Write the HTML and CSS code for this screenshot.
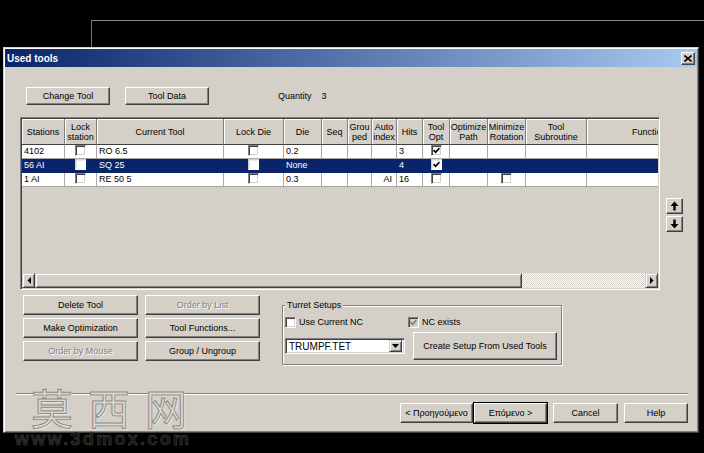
FILE: index.html
```html
<!DOCTYPE html>
<html>
<head>
<meta charset="utf-8">
<title>Used tools</title>
<link rel="stylesheet" href="styles.css">
</head>
<body>
<div class="desktop">
  <div class="bgwin"></div>
  <div class="dialog">
    <div class="titlebar">
      <span class="title">Used tools</span>
      <span class="close"><svg width="8" height="7" viewBox="0 0 8 7"><path d="M0.5 0.5 L7.5 6.5 M7.5 0.5 L0.5 6.5" stroke="#000" stroke-width="1.6" fill="none"/></svg></span>
    </div>
    <div class="content">
      <div class="toprow">
        <button class="btn b84">Change Tool</button>
        <button class="btn b84 gap14">Tool Data</button>
        <span class="qty">Quantity</span><span class="qtyval">3</span>
      </div>

      <div class="midrow">
        <div class="grid">
          <div class="gridview">
            <table class="tbl">
              <colgroup>
                <col class="c-st"><col class="c-ls"><col class="c-ct"><col class="c-ld"><col class="c-die"><col class="c-seq"><col class="c-gr"><col class="c-ai"><col class="c-hits"><col class="c-to"><col class="c-op"><col class="c-mr"><col class="c-ts"><col class="c-fn">
              </colgroup>
              <thead>
                <tr>
                  <th><div class="h"><span>Stations</span></div></th>
                  <th><div class="h"><span>Lock</span><span>station</span></div></th>
                  <th><div class="h"><span>Current Tool</span></div></th>
                  <th><div class="h"><span>Lock Die</span></div></th>
                  <th><div class="h"><span>Die</span></div></th>
                  <th><div class="h"><span>Seq</span></div></th>
                  <th><div class="h"><span>Grou</span><span>ped</span></div></th>
                  <th><div class="h"><span>Auto</span><span>index</span></div></th>
                  <th><div class="h"><span>Hits</span></div></th>
                  <th><div class="h"><span>Tool</span><span>Opt</span></div></th>
                  <th><div class="h"><span>Optimize</span><span>Path</span></div></th>
                  <th><div class="h"><span>Minimize</span><span>Rotation</span></div></th>
                  <th><div class="h"><span>Tool</span><span>Subroutine</span></div></th>
                  <th><div class="h"><span>Functions</span></div></th>
                </tr>
              </thead>
              <tbody>
                <tr>
                  <td>4102</td>
                  <td class="ctr"><span class="cb"></span></td>
                  <td>RO 6.5</td>
                  <td class="ctr"><span class="cb"></span></td>
                  <td>0.2</td>
                  <td></td><td></td><td></td>
                  <td>3</td>
                  <td class="ctr"><span class="cb"><svg width="7" height="7" viewBox="0 0 7 7"><path d="M0.6 3.2 L2.6 5.3 L6.4 1.2" stroke="#000" stroke-width="1.7" fill="none"/></svg></span></td>
                  <td></td><td></td><td></td><td></td>
                </tr>
                <tr class="sel">
                  <td>56 AI</td>
                  <td class="ctr"><span class="cb"></span></td>
                  <td>SQ 25</td>
                  <td class="ctr"><span class="cb"></span></td>
                  <td>None</td>
                  <td></td><td></td><td></td>
                  <td>4</td>
                  <td class="ctr"><span class="cb"><svg width="7" height="7" viewBox="0 0 7 7"><path d="M0.6 3.2 L2.6 5.3 L6.4 1.2" stroke="#000" stroke-width="1.7" fill="none"/></svg></span></td>
                  <td></td><td></td><td></td><td></td>
                </tr>
                <tr>
                  <td>1 AI</td>
                  <td class="ctr"><span class="cb"></span></td>
                  <td>RE 50 5</td>
                  <td class="ctr"><span class="cb"></span></td>
                  <td>0.3</td>
                  <td></td><td></td>
                  <td class="rt">AI</td>
                  <td>16</td>
                  <td class="ctr"><span class="cb"></span></td>
                  <td></td>
                  <td class="ctr"><span class="cb"></span></td>
                  <td></td><td></td>
                </tr>
              </tbody>
            </table>
          </div>
          <div class="hscroll">
            <span class="sbtn"><svg width="4" height="7" viewBox="0 0 4 7"><path d="M4 0 L0.5 3.5 L4 7 Z" fill="#000"/></svg></span>
            <span class="thumb"></span>
            <span class="track"></span>
            <span class="sbtn"><svg width="4" height="7" viewBox="0 0 4 7"><path d="M0 0 L3.5 3.5 L0 7 Z" fill="#000"/></svg></span>
          </div>
        </div>
        <div class="arrows">
          <button class="btn abtn"><svg width="9" height="10" viewBox="0 0 9 10"><path d="M4.5 0.5 L8.5 5 L5.7 5 L5.7 9.5 L3.3 9.5 L3.3 5 L0.5 5 Z" fill="#000"/></svg></button>
          <button class="btn abtn"><svg width="9" height="10" viewBox="0 0 9 10"><path d="M4.5 9.5 L8.5 5 L5.7 5 L5.7 0.5 L3.3 0.5 L3.3 5 L0.5 5 Z" fill="#000"/></svg></button>
        </div>
      </div>

      <div class="lowrow">
        <div class="btngrid">
          <button class="btn">Delete Tool</button>
          <button class="btn dis">Order by List</button>
          <button class="btn">Make Optimization</button>
          <button class="btn">Tool Functions...</button>
          <button class="btn dis">Order by Mouse</button>
          <button class="btn">Group / Ungroup</button>
        </div>
        <fieldset class="turret">
          <legend>Turret Setups</legend>
          <div class="trow1">
            <label class="chk first"><span class="cb gray"></span>Use Current NC</label>
            <label class="chk"><span class="cb dis"><svg width="7" height="7" viewBox="0 0 7 7"><path d="M0.6 3.2 L2.6 5.3 L6.4 1.2" stroke="#808080" stroke-width="1.7" fill="none"/></svg></span>NC exists</label>
          </div>
          <div class="trow2">
            <div class="combo">
              <span class="ctext">TRUMPF.TET</span>
              <span class="cbtn"><svg width="7" height="4" viewBox="0 0 7 4"><path d="M0 0 L7 0 L3.5 4 Z" fill="#000"/></svg></span>
            </div>
            <button class="btn create">Create Setup From Used Tools</button>
          </div>
        </fieldset>
      </div>

      <div class="sep"></div>

      <div class="bottomrow">
        <button class="btn b73">&lt; Προηγούμενο</button>
        <button class="btn b73 def">Επόμενο &gt;</button>
        <button class="btn b65 ml6">Cancel</button>
        <button class="btn b64 ml6">Help</button>
      </div>
    </div>
  </div>
  <div class="wm">莫西网</div>
  <div class="wm2">www.3dmox.com</div>
</div>
</body>
</html>
```

FILE: styles.css
```css
* { box-sizing: border-box; }
html, body { margin: 0; padding: 0; }
body {
  width: 704px; height: 453px; overflow: hidden;
  background: #000;
  font-family: "Liberation Sans", Arial, sans-serif;
  font-size: 9px; color: #000;
}
.desktop { position: relative; width: 704px; height: 453px; overflow: hidden; background: #000; }
.bgwin {
  position: absolute; left: 91px; top: 20px; width: 640px; height: 80px;
  border-top: 1px solid #8e8590; border-left: 1px solid #77707a;
}
.dialog {
  position: absolute; left: 3px; top: 47px; width: 696px; height: 386px;
  background: #d4d0c8;
  border: 1px solid; border-color: #d4d0c8 #404040 #404040 #d4d0c8;
  box-shadow: inset 1px 1px #fff, inset -1px -1px #808080;
  padding: 1px;
  display: flex; flex-direction: column;
}
.titlebar {
  height: 18px; flex: none;
  display: flex; align-items: center; justify-content: space-between;
  padding: 0 2px 0 2px;
  background: linear-gradient(to right, #0a246a, #a6caf0);
}
.title { color: #fff; font-weight: bold; font-size: 10px; }
.close {
  width: 14px; height: 13px; background: #d4d0c8;
  border: 1px solid; border-color: #fff #404040 #404040 #fff;
  box-shadow: inset -1px -1px #808080;
  display: flex; align-items: center; justify-content: center;
}
.close svg { display: block; }
.content { flex: 1; display: flex; flex-direction: column; }

.btn {
  font-family: "Liberation Sans", Arial, sans-serif; font-size: 9px; color: #000;
  background: #d4d0c8;
  border: 1px solid; border-color: #fff #404040 #404040 #fff;
  box-shadow: inset -1px -1px #808080;
  padding: 0; margin: 0;
  display: flex; align-items: center; justify-content: center;
  white-space: nowrap;
}
.btn.dis { color: #808080; text-shadow: 1px 1px 0 #fff; }
.btn.def { outline: 1px solid #000; border-color: #fff #404040 #404040 #fff; }
.btn svg { display: block; }

.toprow { display: flex; align-items: center; margin-top: 20px; padding-left: 21px; height: 18px; }
.b84 { width: 84px; height: 18px; }
.gap14 { margin-left: 15px; }
.qty { margin-left: 69px; }
.qtyval { margin-left: 10px; }

.midrow { display: flex; margin-top: 12px; padding-left: 15px; }
.grid {
  width: 640px; height: 173px; flex: none;
  border: 1px solid; border-color: #808080 #fff #fff #808080;
  box-shadow: inset 1px 1px #404040, inset -1px -1px #d4d0c8;
  padding: 1px;
  background: #d4d0c8;
  display: flex; flex-direction: column;
}
.gridview { flex: 1; overflow: hidden; }
.tbl { table-layout: fixed; width: 695px; border-collapse: separate; border-spacing: 0; }
.c-st { width: 43px; } .c-ls { width: 32px; } .c-ct { width: 127px; } .c-ld { width: 60px; }
.c-die { width: 38px; } .c-seq { width: 26px; } .c-gr { width: 24px; } .c-ai { width: 25px; }
.c-hits { width: 26px; } .c-to { width: 27px; } .c-op { width: 38px; } .c-mr { width: 38px; }
.c-ts { width: 61px; } .c-fn { width: 130px; }
.tbl th {
  padding: 0; font-weight: normal; background: #d4d0c8;
  border-right: 1px solid #808080; border-bottom: 1px solid #404040;
  box-shadow: inset 1px 1px #fff;
  overflow: hidden;
}
.h {
  height: 25px; overflow: hidden;
  display: flex; flex-direction: column; align-items: center; justify-content: center;
  white-space: nowrap; line-height: 10px;
}
.tbl td {
  height: 14px; padding: 0 2px; line-height: 13px;
  background: #fff;
  border-right: 1px solid #a8a8a8; border-bottom: 1px solid #a8a8a8;
  white-space: nowrap; overflow: hidden;
}
.tbl tr.sel td { background: #0a246a; color: #fff; border-color: #0a246a; }
.tbl td.ctr { text-align: center; padding: 0; }
.tbl td.rt { text-align: right; padding-right: 4px; }
.cb {
  display: inline-flex; align-items: center; justify-content: center;
  width: 11px; height: 11px; vertical-align: middle;
  background: #fff;
  border: 1px solid; border-color: #808080 #fff #fff #808080;
  box-shadow: inset 1px 1px #404040, inset -1px -1px #d4d0c8;
}
.tbl td .cb { margin-top: -2px; }
.tbl tr.sel .cb { border-color: #d4d0c8 #fff #fff #d4d0c8; box-shadow: inset 1px 1px #e8e8e8; }
.cb.dis { background: #d4d0c8; }
.cb svg { display: block; }

.hscroll { height: 15px; flex: none; display: flex; }
.sbtn {
  width: 13px; height: 15px; background: #d4d0c8;
  border: 1px solid; border-color: #d4d0c8 #404040 #404040 #d4d0c8;
  box-shadow: inset 1px 1px #fff, inset -1px -1px #808080;
  display: flex; align-items: center; justify-content: center;
}
.thumb {
  width: 487px; height: 15px; background: #d4d0c8;
  border: 1px solid; border-color: #d4d0c8 #404040 #404040 #d4d0c8;
  box-shadow: inset 1px 1px #fff, inset -1px -1px #808080;
}
.track {
  flex: 1; height: 15px;
  background: repeating-conic-gradient(#d4d0c8 0 25%, #fff 0 50%) 0 0 / 2px 2px;
}

.arrows { display: flex; flex-direction: column; gap: 2px; margin-left: 6px; margin-top: 81px; }
.abtn { width: 17px; height: 16px; }

.lowrow { display: flex; align-items: flex-start; margin-top: 5px; padding-left: 18px; height: 72px; }
.btngrid {
  display: grid; grid-template-columns: 115px 115px; grid-auto-rows: 20px;
  column-gap: 7px; row-gap: 3px;
}
.turret {
  margin: 5px 0 0 22px; padding: 5px 0 4px 2px;
  width: 280px;
  border: 1px solid #808080;
  box-shadow: 1px 1px 0 #fff, inset 1px 1px 0 #fff;
  min-width: 0;
}
.turret legend { font-size: 9px; line-height: 11px; padding: 0 2px; margin-left: 0; background: #d4d0c8; }
.trow1 { display: flex; align-items: center; height: 12px; }
.chk { display: flex; align-items: center; gap: 3px; }
.chk.first { width: 123px; }
.cb.gray { background: #fff; }
.trow2 { display: flex; align-items: center; margin-top: 4px; height: 28px; }
.combo {
  width: 120px; height: 16px; background: #fff;
  border: 1px solid; border-color: #808080 #fff #fff #808080;
  box-shadow: inset 1px 1px #404040, inset -1px -1px #d4d0c8;
  display: flex; align-items: center; justify-content: space-between;
  padding: 2px 2px 2px 3px;
  font-size: 10px;
}
.cbtn {
  width: 13px; height: 12px; background: #d4d0c8;
  border: 1px solid; border-color: #d4d0c8 #404040 #404040 #d4d0c8;
  box-shadow: inset 1px 1px #fff, inset -1px -1px #808080;
  display: flex; align-items: center; justify-content: center;
}
.create { width: 144px; height: 28px; margin-left: 8px; }

.sep { height: 2px; margin: 26px 9px 0 11px; border-top: 1px solid #808080; border-bottom: 1px solid #fff; flex: none; }

.bottomrow { display: flex; justify-content: flex-end; margin-top: 8px; padding-right: 9px; }
.b73 { width: 73px; height: 20px; }
.b65 { width: 65px; height: 20px; }
.b64 { width: 64px; height: 20px; }
.b73.def { margin-left: 1px; }
.ml6 { margin-left: 6px; }

.wm {
  position: absolute; left: 31px; top: 388px;
  font-family: "Noto Sans CJK SC", sans-serif; font-size: 42px; line-height: 38px;
  letter-spacing: 15px;
  color: #dcd9d2; -webkit-text-stroke: 1px #8e8b85;
  text-shadow: 1px 1px 0 #f4f2ee;
}
.wm2 {
  position: absolute; left: 15px; top: 431px;
  font-family: "Liberation Sans", Arial, sans-serif; font-weight: bold; font-size: 18px; line-height: 16px;
  letter-spacing: 2.3px;
  color: #151515; -webkit-text-stroke: 0.5px #4a4a4a;
}
```
